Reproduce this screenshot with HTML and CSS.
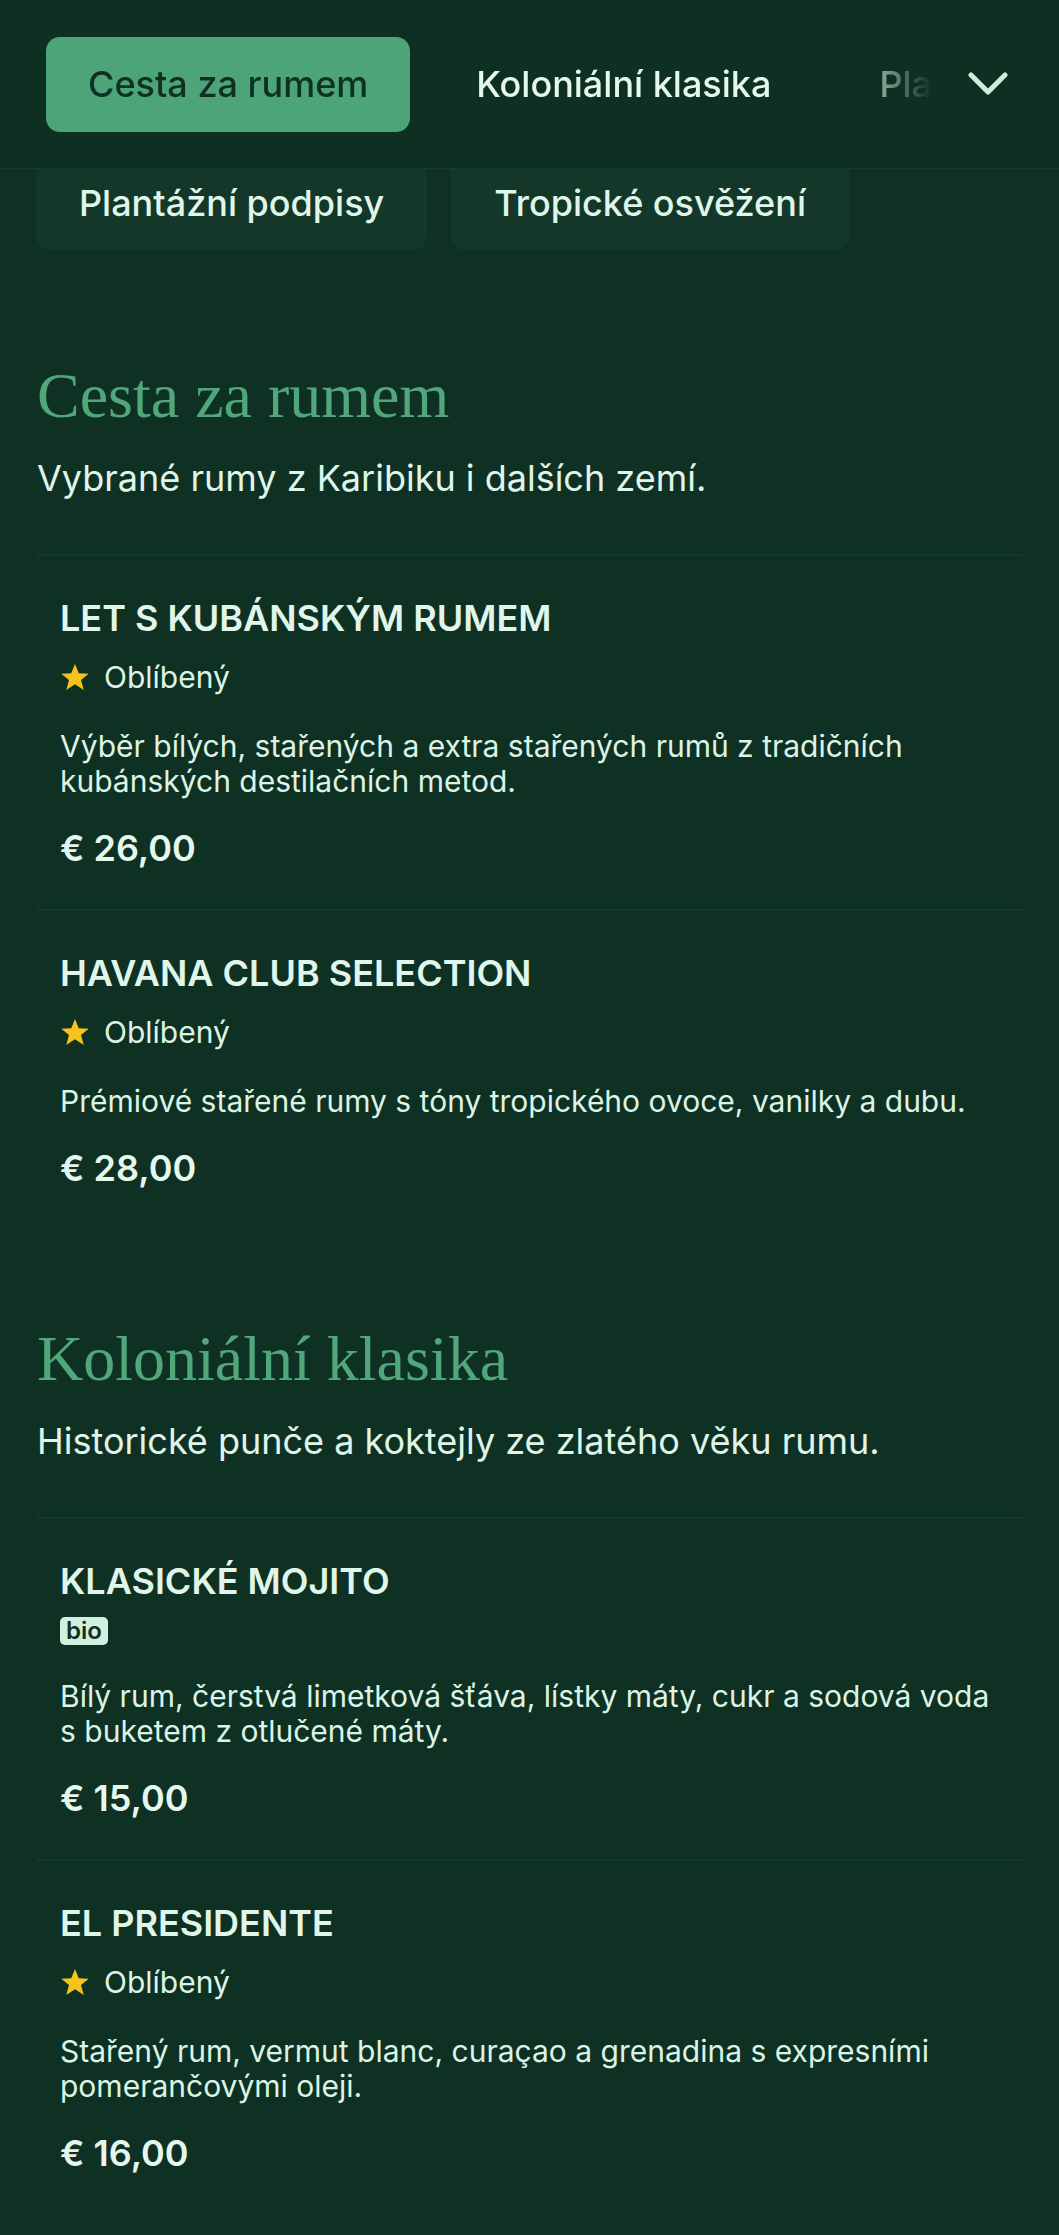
FILE: index.html
```html
<!DOCTYPE html>
<html lang="cs">
<head>
<meta charset="utf-8">
<title>Menu – rum</title>
<link rel="stylesheet" href="styles.css">
</head>
<body>
<header class="topbar">
  <nav class="tabs">
    <a class="tab tab-active" href="#cesta">Cesta za rumem</a>
    <a class="tab" href="#kolonialni">Koloniální klasika</a>
    <a class="tab" href="#plantazni">Plantážní podpisy</a>
    <a class="tab" href="#tropicke">Tropické osvěžení</a>
  </nav>
  <button class="expand" aria-label="Zobrazit kategorie">
    <svg width="40" height="24" viewBox="0 0 40 24"><polyline points="3,3 20,20 37,3" fill="none" stroke="#cdeedc" stroke-width="5" stroke-linecap="round" stroke-linejoin="round"/></svg>
  </button>
</header>

<div class="pills">
  <a class="pill" href="#plantazni">Plantážní podpisy</a>
  <a class="pill" href="#tropicke">Tropické osvěžení</a>
</div>

<main class="menu">
  <section class="section" id="cesta">
    <h2 class="section-title">Cesta za rumem</h2>
    <p class="section-sub">Vybrané rumy z Karibiku i dalších zemí.</p>

    <article class="item">
      <h3 class="item-name">LET S KUBÁNSKÝM RUMEM</h3>
      <div class="item-tag"><svg class="star" width="30" height="30" viewBox="0 0 24 24"><polygon points="12,1.5 15,9 23,9.3 16.8,14.3 19,22.3 12,17.8 5,22.3 7.2,14.3 1,9.3 9,9" fill="#f6c21c"/></svg><span>Oblíbený</span></div>
      <p class="item-desc">Výběr bílých, stařených a extra stařených rumů z tradičních kubánských destilačních metod.</p>
      <p class="item-price">€ 26,00</p>
    </article>

    <article class="item">
      <h3 class="item-name">HAVANA CLUB SELECTION</h3>
      <div class="item-tag"><svg class="star" width="30" height="30" viewBox="0 0 24 24"><polygon points="12,1.5 15,9 23,9.3 16.8,14.3 19,22.3 12,17.8 5,22.3 7.2,14.3 1,9.3 9,9" fill="#f6c21c"/></svg><span>Oblíbený</span></div>
      <p class="item-desc">Prémiové stařené rumy s tóny tropického ovoce, vanilky a dubu.</p>
      <p class="item-price">€ 28,00</p>
    </article>
  </section>

  <section class="section" id="kolonialni">
    <h2 class="section-title">Koloniální klasika</h2>
    <p class="section-sub">Historické punče a koktejly ze zlatého věku rumu.</p>

    <article class="item">
      <h3 class="item-name">KLASICKÉ MOJITO</h3>
      <div class="item-tag item-tag-badge"><span class="badge">bio</span></div>
      <p class="item-desc">Bílý rum, čerstvá limetková šťáva, lístky máty, cukr a sodová voda s buketem z otlučené máty.</p>
      <p class="item-price">€ 15,00</p>
    </article>

    <article class="item">
      <h3 class="item-name">EL PRESIDENTE</h3>
      <div class="item-tag"><svg class="star" width="30" height="30" viewBox="0 0 24 24"><polygon points="12,1.5 15,9 23,9.3 16.8,14.3 19,22.3 12,17.8 5,22.3 7.2,14.3 1,9.3 9,9" fill="#f6c21c"/></svg><span>Oblíbený</span></div>
      <p class="item-desc">Stařený rum, vermut blanc, curaçao a grenadina s expresními pomerančovými oleji.</p>
      <p class="item-price">€ 16,00</p>
    </article>
  </section>
</main>
</body>
</html>
```

FILE: styles.css
```css
* { box-sizing: border-box; }

html, body {
  margin: 0;
  padding: 0;
  background: #0f3124;
}

body {
  font-family: Inter, "Noto Sans", "Liberation Sans", sans-serif;
  color: #dcf4e6;
  min-height: 2235px;
}

a { text-decoration: none; color: inherit; }

.topbar {
  position: sticky;
  top: 0;
  z-index: 2;
  display: flex;
  align-items: center;
  height: 169px;
  padding: 0 51px 0 46px;
  background: #0e3023;
  border-bottom: 1px solid #173c2e;
}

.tabs {
  flex: 1;
  min-width: 0;
  display: flex;
  gap: 24px;
  overflow: hidden;
  white-space: nowrap;
  -webkit-mask-image: linear-gradient(to right, #000 0, #000 calc(100% - 95px), transparent calc(100% - 8px));
  mask-image: linear-gradient(to right, #000 0, #000 calc(100% - 95px), transparent calc(100% - 8px));
}

.tab {
  flex: none;
  display: flex;
  align-items: center;
  height: 95px;
  padding: 0 42px;
  border-radius: 14px;
  font-size: 36px;
  font-weight: 500;
  color: #e6f7ed;
}

.tab-active {
  background: #4ca478;
  color: #0f3124;
}

.expand {
  flex: none;
  margin-left: 28px;
  padding: 0;
  border: 0;
  background: none;
  display: flex;
}

.pills {
  display: flex;
  gap: 24px;
  padding: 0 36px;
  margin-top: -14px;
}

.pill {
  display: flex;
  align-items: center;
  height: 95px;
  padding: 0 43px;
  border-radius: 14px;
  background: #13382a;
  font-size: 36px;
  font-weight: 500;
  color: #e0f6ea;
}

.menu {
  padding: 0 37px 40px;
}

.section {
  padding-top: 109px;
}

.section + .section {
  padding-top: 93px;
}

.section-title {
  margin: 0;
  font-family: "Liberation Serif", "DejaVu Serif", serif;
  font-weight: 400;
  font-size: 64px;
  line-height: 74px;
  color: #4fa77a;
}

.section-sub {
  margin: 23px 0 0;
  font-size: 36px;
  line-height: 44px;
  color: #e0f5e9;
}

.section-sub + .item {
  margin-top: 54px;
}

.item {
  padding: 40px 23px 39px;
  border-top: 2px solid #143a2c;
}

.item-name {
  margin: 0;
  font-size: 36px;
  line-height: 44px;
  font-weight: 600;
  color: #e0f6ea;
}

.item-tag {
  display: flex;
  align-items: center;
  gap: 14px;
  margin-top: 19px;
  min-height: 28px;
  font-size: 30px;
  line-height: 36px;
  color: #dcf4e6;
}

.item-tag-badge {
  margin-top: 14px;
}

.star { flex: none; }

.badge {
  display: inline-block;
  padding: 0 6px;
  border-radius: 5px;
  background: #d3efdf;
  color: #0f3124;
  font-size: 24px;
  font-weight: 600;
  line-height: 28px;
}

.item-desc {
  margin: 34px 0 0;
  font-size: 30px;
  line-height: 35px;
  color: #dcf4e6;
}

.item-price {
  margin: 27px 0 0;
  font-size: 36px;
  line-height: 44px;
  font-weight: 600;
  color: #e6f8ee;
}
```
